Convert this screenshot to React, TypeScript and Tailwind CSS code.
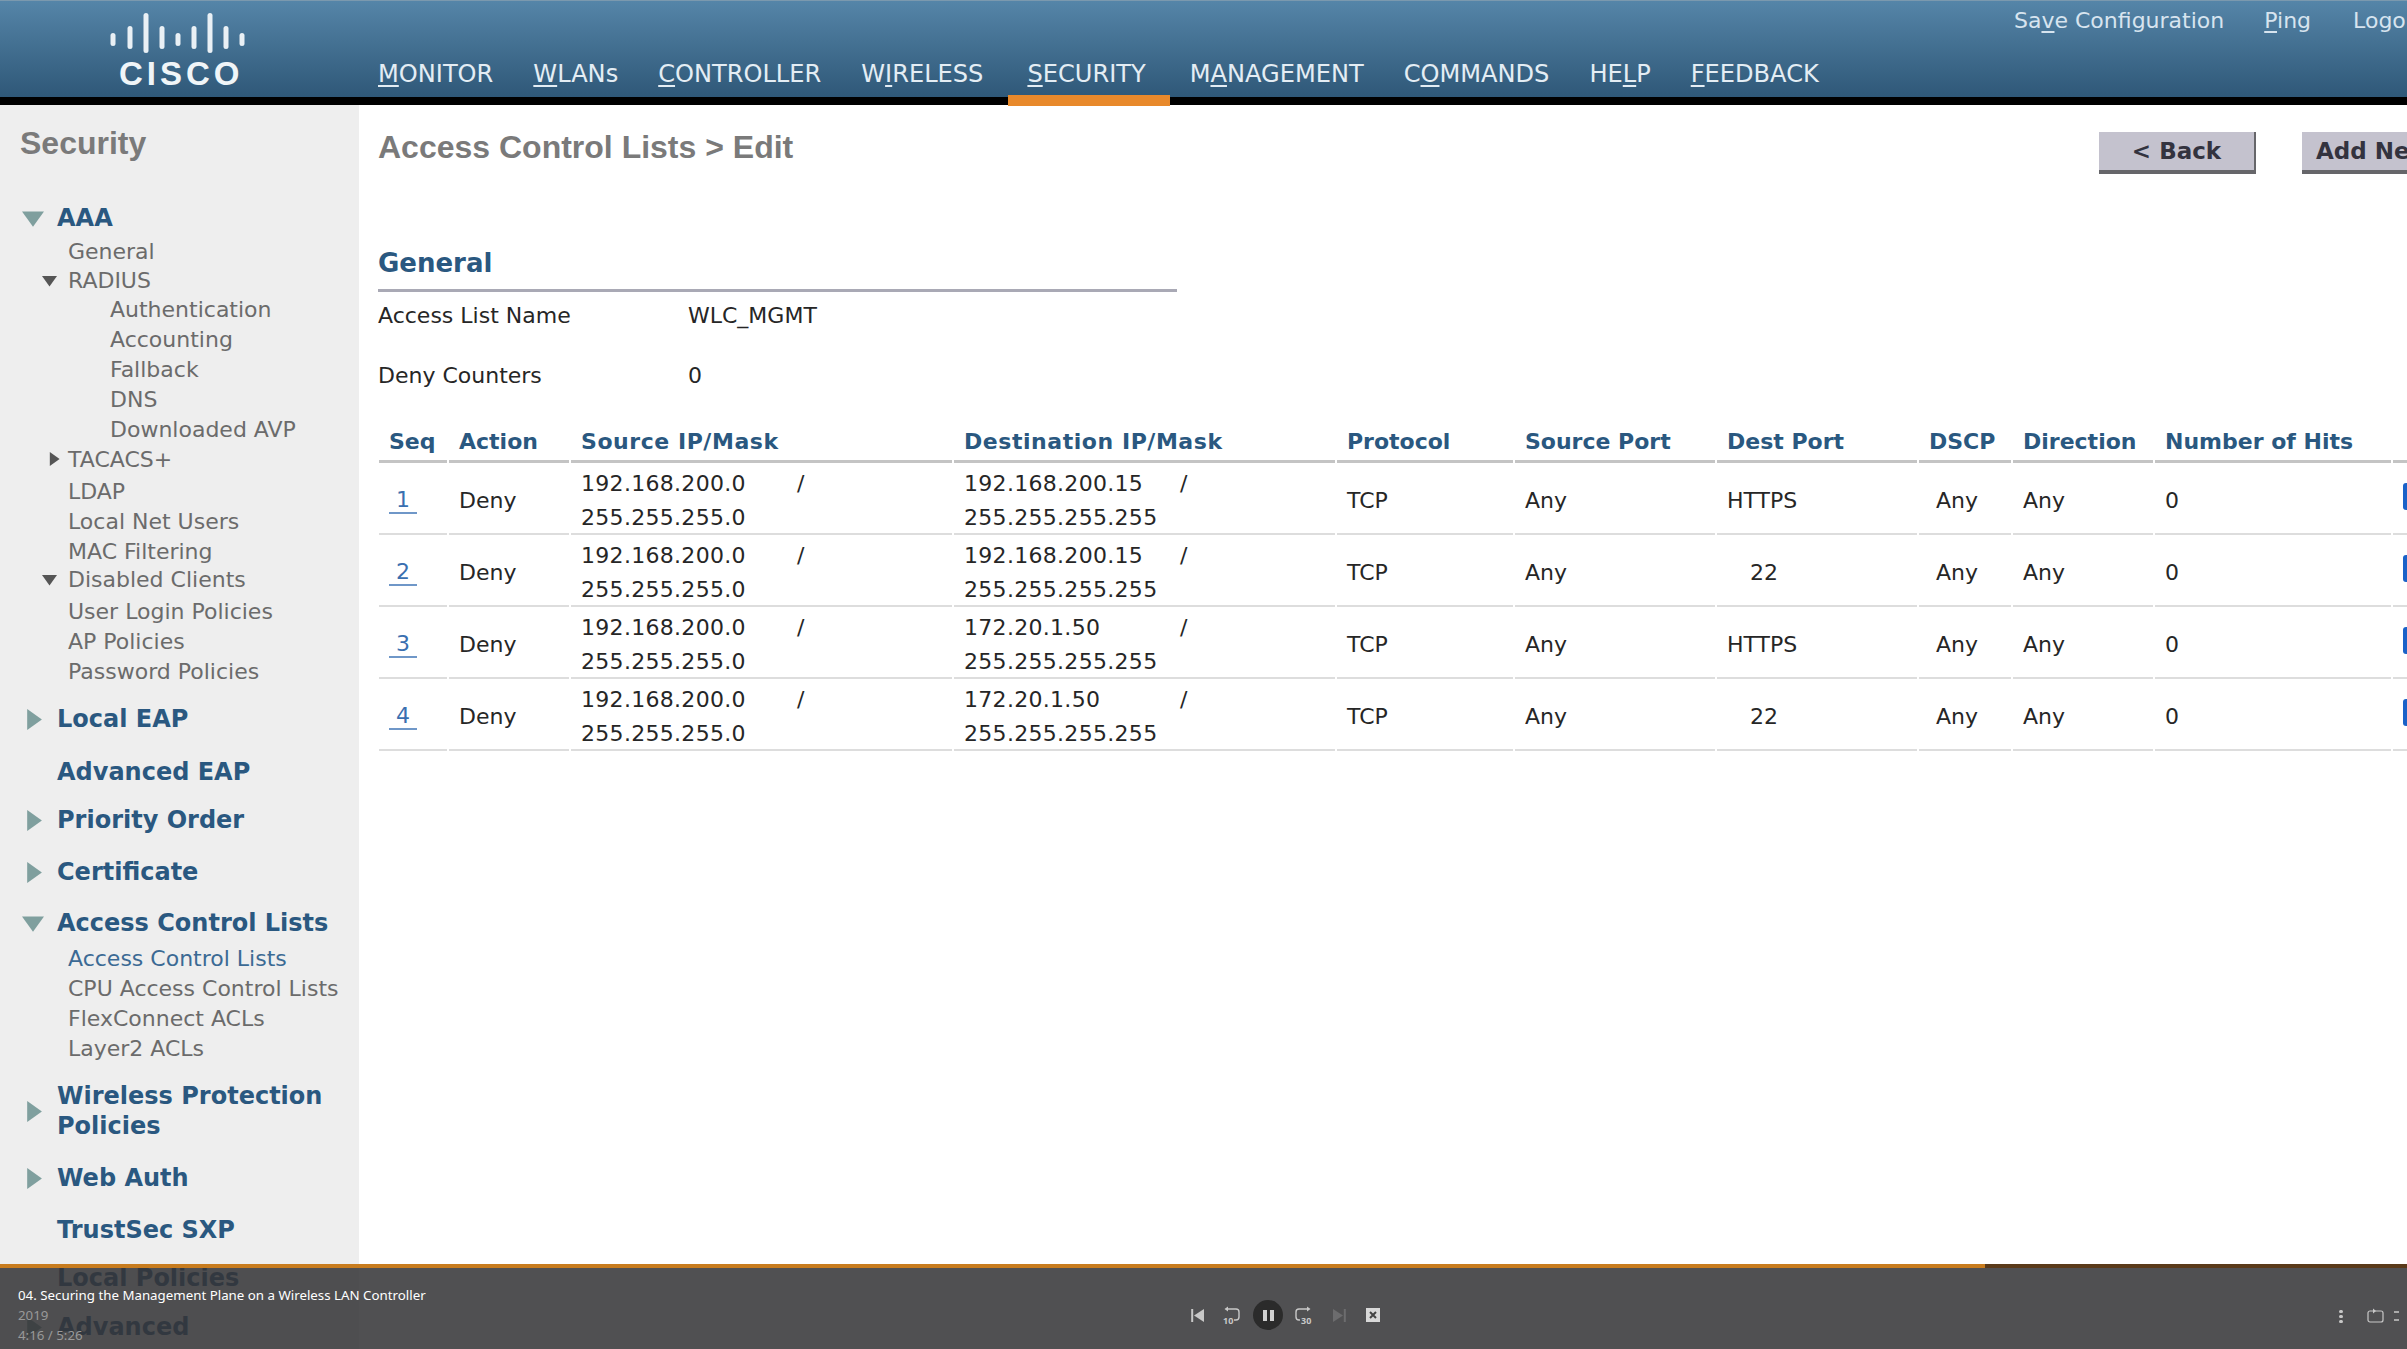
import React from "react";

const dv = "font-['DejaVu_Sans',sans-serif]";

function Arrow({ dir, size, color }: { dir: "down" | "right"; size: number; color: string }) {
  return (
    <svg width={size} height={size} viewBox="0 0 10 10" className="shrink-0">
      {dir === "down" ? <path d="M0 2 H10 L5 9 Z" fill={color} /> : <path d="M2 0 V10 L9 5 Z" fill={color} />}
    </svg>
  );
}

function Key({ pre = "", k, post = "" }: { pre?: string; k: string; post?: string }) {
  return (
    <span>
      {pre}
      <span className="underline underline-offset-[3px]">{k}</span>
      {post}
    </span>
  );
}

function Logo() {
  const bars = [
    [113, 32, 45], [130, 25, 48], [146, 12, 52], [162, 25, 48], [178, 32, 45],
    [194, 25, 48], [210, 12, 52], [226, 25, 48], [242, 32, 45],
  ];
  return (
    <div className="w-[378px] shrink-0 h-[97px] flex flex-col">
      <svg width="378" height="56" className="shrink-0">
        {bars.map(([x, a, b]) => (
          <rect key={x} x={x - 2.5} y={a} width="5" height={b - a} rx="2.5" fill="#e9f0f5" />
        ))}
      </svg>
      <div className="pl-[119px] text-[33px] leading-[34px] font-bold tracking-[4px] text-[#f0f5f8] font-['Liberation_Sans',sans-serif]">CISCO</div>
    </div>
  );
}

function Header() {
  const nav = [
    { pre: "", k: "M", post: "ONITOR", cls: "" },
    { pre: "", k: "W", post: "LANs", cls: "" },
    { pre: "", k: "C", post: "ONTROLLER", cls: "" },
    { pre: "W", k: "I", post: "RELESS", cls: "mr-[4px]" },
    { pre: "", k: "S", post: "ECURITY", cls: "mr-[4px]" },
    { pre: "M", k: "A", post: "NAGEMENT", cls: "" },
    { pre: "C", k: "O", post: "MMANDS", cls: "" },
    { pre: "HE", k: "L", post: "P", cls: "" },
    { pre: "", k: "F", post: "EEDBACK", cls: "" },
  ];
  return (
    <header className="h-[105px] flex flex-col shrink-0">
      <div className="h-[97px] flex bg-gradient-to-b from-[#5585a8] to-[#2f5878] border-t border-[#7b99ae]">
        <Logo />
        <div className="flex-1 min-w-0 flex flex-col">
          <div className={`h-[38px] flex items-center pl-[1636px] whitespace-nowrap text-[22px] text-[#d7e4ef] ${dv}`}>
            <Key pre="Sa" k="v" post="e Configuration" />
            <span className="mx-[20px] w-[2px] h-[22px] bg-[#244a6c]" />
            <Key k="P" post="ing" />
            <span className="ml-[20px] mr-[22px] w-[2px] h-[22px] bg-[#244a6c]" />
            <span>Logout</span>
          </div>
          <nav className={`mt-[16px] flex gap-[40px] whitespace-nowrap text-[24.1px] leading-[38px] text-[#e4edf4] ${dv}`}>
            {nav.map((n) => (
              <div key={n.k + n.post} className={n.cls}>
                <Key pre={n.pre} k={n.k} post={n.post} />
              </div>
            ))}
          </nav>
        </div>
      </div>
      <div className="h-[8px] bg-black pl-[1008px]">
        <div className="relative -top-[2px] w-[162px] h-[11px] bg-[#e8892b]" />
      </div>
    </header>
  );
}

type Item = { t: React.ReactNode; cls: string; arrow?: "down" | "right"; active?: boolean };

function Head({ t, cls, arrow }: Item) {
  return (
    <div className={`flex items-center text-[24px] leading-[30px] font-bold text-[#2a5880] ${cls}`}>
      <span className={`w-[57px] shrink-0 flex ${arrow === "right" ? "pl-[23px]" : "pl-[22px]"}`}>
        {arrow && <Arrow dir={arrow} size={arrow === "right" ? 21 : 22} color="#7f9f9e" />}
      </span>
      <span>{t}</span>
    </div>
  );
}

function L1({ t, cls, arrow, active }: Item) {
  return (
    <div className={`flex items-center h-[30px] text-[22px] ${active ? "text-[#3b6a94]" : "text-[#6b6b6b]"} ${cls}`}>
      <span className={`w-[68px] shrink-0 flex ${arrow === "right" ? "pl-[47px]" : "pl-[42px]"}`}>
        {arrow && <Arrow dir={arrow} size={arrow === "right" ? 14 : 15} color="#555" />}
      </span>
      <span>{t}</span>
    </div>
  );
}

function L2({ t, cls }: Item) {
  return <div className={`h-[30px] leading-[30px] pl-[110px] text-[22px] text-[#6b6b6b] ${cls}`}>{t}</div>;
}

function Sidebar() {
  return (
    <aside className={`w-[359px] shrink-0 bg-[#eeeeee] whitespace-nowrap ${dv}`}>
      <div className="pl-[20px] pt-[18px] h-[98px] text-[32px] leading-[40px] font-bold text-[#7a7a7a] font-['Liberation_Sans',sans-serif]">Security</div>
      <Head t="AAA" arrow="down" cls="" />
      <L1 t="General" cls="mt-[3px]" />
      <L1 t="RADIUS" arrow="down" cls="-mt-[1px]" />
      <L2 t="Authentication" cls="" />
      <L2 t="Accounting" cls="" />
      <L2 t="Fallback" cls="" />
      <L2 t="DNS" cls="" />
      <L2 t="Downloaded AVP" cls="" />
      <L1 t="TACACS+" arrow="right" cls="-mt-[1px]" />
      <L1 t="LDAP" cls="mt-[2px]" />
      <L1 t="Local Net Users" cls="" />
      <L1 t="MAC Filtering" cls="" />
      <L1 t="Disabled Clients" arrow="down" cls="-mt-[2px]" />
      <L1 t="User Login Policies" cls="mt-[2px]" />
      <L1 t="AP Policies" cls="" />
      <L1 t="Password Policies" cls="" />
      <Head t="Local EAP" arrow="right" cls="mt-[18px]" />
      <Head t="Advanced EAP" cls="mt-[23px]" />
      <Head t="Priority Order" arrow="right" cls="mt-[18px]" />
      <Head t="Certificate" arrow="right" cls="mt-[22px]" />
      <Head t="Access Control Lists" arrow="down" cls="mt-[21px]" />
      <L1 t="Access Control Lists" active cls="mt-[5px]" />
      <L1 t="CPU Access Control Lists" cls="" />
      <L1 t="FlexConnect ACLs" cls="" />
      <L1 t="Layer2 ACLs" cls="" />
      <Head t={<>Wireless Protection<br />Policies</>} arrow="right" cls="mt-[18px]" />
      <Head t="Web Auth" arrow="right" cls="mt-[22px]" />
      <Head t="TrustSec SXP" cls="mt-[22px]" />
      <Head t="Local Policies" cls="mt-[18px]" />
      <Head t="Advanced" arrow="right" cls="mt-[19px]" />
    </aside>
  );
}

function Btn({ children, cls }: { children: React.ReactNode; cls: string }) {
  return (
    <div className={`h-[42px] bg-[#c4c2ce] border-r-2 border-b-4 border-[#66666a] flex items-center text-[23px] font-bold text-[#33333f] whitespace-nowrap shrink-0 ${cls}`}>
      {children}
    </div>
  );
}

const cols = "grid grid-cols-[68px_120px_381px_381px_176px_200px_200px_92px_140px_236px_60px] gap-x-[2px]";
const rows = [
  ["1", "192.168.200.15", "HTTPS"],
  ["2", "192.168.200.15", "22"],
  ["3", "172.20.1.50", "HTTPS"],
  ["4", "172.20.1.50", "22"],
];
const heads = ["Seq", "Action", "Source IP/Mask", "Destination IP/Mask", "Protocol", "Source Port", "Dest Port", "DSCP", "Direction", "Number of Hits", ""];

function Ip({ a, b }: { a: string; b: string }) {
  return (
    <div className="flex flex-col tracking-[0.3px]">
      <div className="flex h-[34px] items-center">
        <span className="w-[216px]">{a}</span>
        <span>/</span>
      </div>
      <div className="h-[34px] flex items-center">{b}</div>
    </div>
  );
}

function Table() {
  const cell = "flex items-center pl-[10px] pt-[5px] h-[72px] border-b-2 border-[#dddddd]";
  return (
    <div className={`mt-[32px] ml-[1px] w-[2500px] text-[22px] text-[#262626] ${dv} whitespace-nowrap`}>
      <div className={cols}>
        {heads.map((h) => (
          <div key={h || "x"} className={`h-[38px] pl-[10px] border-b-[3px] border-[#c4c4c4] text-[22px] leading-[34px] font-bold text-[#2a5880] ${h.includes("/") ? "tracking-[0.55px]" : ""}`}>
            {h}
          </div>
        ))}
      </div>
      {rows.map(([seq, dst, port]) => (
        <div key={seq} className={cols}>
          <div className={cell}>
            <span className="w-[28px] text-center leading-[24px] text-[#3a6fb0] border-b-2 border-[#6f97c8]">{seq}</span>
          </div>
          <div className={cell}>Deny</div>
          <div className={cell}><Ip a="192.168.200.0" b="255.255.255.0" /></div>
          <div className={cell}><Ip a={dst} b="255.255.255.255" /></div>
          <div className={cell}>TCP</div>
          <div className={cell}>Any</div>
          <div className={cell}>
            {port === "22" ? <span className="pl-[23px]">22</span> : port}
          </div>
          <div className={`${cell} !pl-[17px]`}>Any</div>
          <div className={cell}>Any</div>
          <div className={cell}>0</div>
          <div className={`${cell} !pl-[10px]`}>
            <div className="w-[14px] h-[27px] rounded-[3px] bg-[#1a62c8] -mt-[8px]" />
          </div>
        </div>
      ))}
    </div>
  );
}

function Main() {
  return (
    <main className={`flex-1 min-w-0 bg-white pl-[19px] ${dv}`}>
      <div className="flex items-start w-[2200px] pt-[27px]">
        <h1 className="w-[1721px] shrink-0 text-[32px] leading-[30px] font-bold text-[#7a7a7a] font-['Liberation_Sans',sans-serif]">Access Control Lists &gt; Edit</h1>
        <Btn cls="w-[157px] justify-center">&lt; Back</Btn>
        <Btn cls="ml-[46px] w-[200px] pl-[14px]">Add New</Btn>
      </div>
      <h2 className="mt-[71px] text-[26px] leading-[36px] font-bold text-[#2a5880]">General</h2>
      <div className="w-[799px] h-[3px] mt-[8px] bg-[#a9a9b5]" />
      <div className="mt-[7px] flex text-[22px] leading-[34px] text-[#262626]">
        <span className="w-[310px]">Access List Name</span>
        <span>WLC_MGMT</span>
      </div>
      <div className="mt-[26px] flex text-[22px] leading-[34px] text-[#262626]">
        <span className="w-[310px]">Deny Counters</span>
        <span>0</span>
      </div>
      <Table />
    </main>
  );
}

function Player() {
  const ic = "#c8c8c8";
  return (
    <div className="absolute left-0 right-0 top-[1264px] h-[85px] bg-[rgba(51,51,53,0.86)] font-['Noto_Sans',sans-serif]">
      <div className="h-[4px] bg-[#5a3a1a] flex">
        <div className="w-[1985px] bg-[#c87c1e]" />
      </div>
      <div className="relative h-[81px]">
        <div className="pl-[18px] pt-[17px] text-[13.3px]">
          <div className="h-[20px] leading-[20px] text-white">04. Securing the Management Plane on a Wireless LAN Controller</div>
          <div className="h-[20px] leading-[20px] text-[#999]">2019</div>
          <div className="h-[20px] leading-[20px] text-[#999]">4:16 / 5:26</div>
        </div>
        <div className="absolute left-[1191px] top-[32px] flex items-center h-[30px]">
          <svg width="14" height="15" viewBox="0 0 14 15"><path d="M1.2 1v13" stroke={ic} strokeWidth="2" /><path d="M13 1v13L3 7.5z" fill={ic} /></svg>
          <svg width="18" height="19" viewBox="0 0 18 19" fill="none" className="ml-[18px] overflow-visible">
            <path d="M4 3h9a3 3 0 0 1 3 3v5a3 3 0 0 1-3 3h-2" stroke={ic} strokeWidth="1.4" />
            <path d="M5 0.5v5L1.5 3z" fill={ic} />
            <text x="0" y="18" fontSize="9" fontWeight="700" fill={ic}>10</text>
          </svg>
          <div className="ml-[12px] w-[30px] h-[30px] rounded-full bg-[#2b2b2b] flex items-center justify-center gap-[3px]">
            <div className="w-[4px] h-[11px] bg-[#d0d0d0]" />
            <div className="w-[4px] h-[11px] bg-[#d0d0d0]" />
          </div>
          <svg width="18" height="19" viewBox="0 0 18 19" fill="none" className="ml-[11px] overflow-visible">
            <path d="M14 3H5a3 3 0 0 0-3 3v5a3 3 0 0 0 3 3h1" stroke={ic} strokeWidth="1.4" />
            <path d="M13 0.5v5L16.5 3z" fill={ic} />
            <text x="7" y="18" fontSize="9" fontWeight="700" fill={ic}>30</text>
          </svg>
          <svg width="14" height="15" viewBox="0 0 14 15" className="ml-[20px]"><path d="M12.8 1v13" stroke="#6c6c6e" strokeWidth="2" /><path d="M1 1v13l10-6.5z" fill="#6c6c6e" /></svg>
          <svg width="14" height="14" viewBox="0 0 14 14" className="ml-[20px]"><rect width="14" height="14" fill="#d8d8d8" /><path d="M4 4l6 6M10 4l-6 6" stroke="#444" strokeWidth="2" /></svg>
        </div>
        <div className="absolute left-[2339px] top-[40px] flex items-center">
          <div className="flex flex-col gap-[2px]">
            <div className="w-[4px] h-[3px] rounded-full bg-[#c8c8c8]" />
            <div className="w-[4px] h-[3px] rounded-full bg-[#c8c8c8]" />
            <div className="w-[4px] h-[3px] rounded-full bg-[#c8c8c8]" />
          </div>
          <svg width="18" height="16" viewBox="0 0 18 16" fill="none" className="ml-[24px]">
            <rect x="1" y="3" width="15" height="11" rx="2" stroke={ic} strokeWidth="1.2" />
            <path d="M6 0.5v5l3-2.5z" fill={ic} />
          </svg>
          <svg width="8" height="14" viewBox="0 0 8 14" fill="none" className="ml-[9px]"><path d="M0 3h5M0 11h5" stroke={ic} strokeWidth="1.4" /></svg>
        </div>
      </div>
    </div>
  );
}

export default function App() {
  return (
    <div className="relative w-[2407px] h-[1349px] overflow-hidden bg-white flex flex-col">
      <Header />
      <div className="flex flex-1 min-h-0">
        <Sidebar />
        <Main />
      </div>
      <Player />
    </div>
  );
}
